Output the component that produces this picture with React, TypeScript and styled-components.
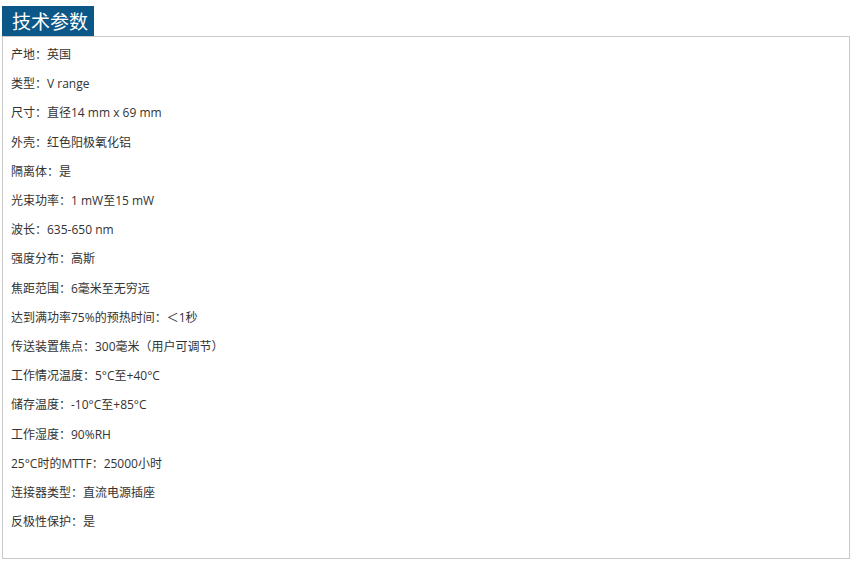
import React from 'react'
import styled, { createGlobalStyle } from 'styled-components'

const GlobalStyle = createGlobalStyle`
  body {
    margin: 0;
    background: #fff;
    font-family: "Open Sans", "Noto Sans CJK SC", sans-serif;
  }
`

const Wrapper = styled.div`
  padding: 6px 0 0 2px;
  width: 848px;
`

const TabTitle = styled.div`
  display: inline-block;
  background: #0b5788;
  color: #fff;
  font-family: "Noto Sans CJK SC", sans-serif;
  font-size: 19px;
  line-height: 30px;
  height: 30px;
  padding: 0 6px 0 10px;
`

const SpecBox = styled.div`
  border: 1px solid #c9c9c9;
  height: 518px;
  padding: 3px 8px 0;
  box-sizing: content-box;
  width: 830px;
`

const SpecRow = styled.p`
  margin: 0;
  font-size: 12px;
  line-height: 29.2px;
  color: #333;
`

const specs = [
  '产地：英国',
  '类型：V range',
  '尺寸：直径14 mm x 69 mm',
  '外壳：红色阳极氧化铝',
  '隔离体：是',
  '光束功率：1 mW至15 mW',
  '波长：635-650 nm',
  '强度分布：高斯',
  '焦距范围：6毫米至无穷远',
  '达到满功率75%的预热时间：＜1秒',
  '传送装置焦点：300毫米（用户可调节）',
  '工作情况温度：5°C至+40°C',
  '储存温度：-10°C至+85°C',
  '工作湿度：90%RH',
  '25°C时的MTTF：25000小时',
  '连接器类型：直流电源插座',
  '反极性保护：是',
]

export default function App() {
  return (
    <Wrapper>
      <GlobalStyle />
      <TabTitle>技术参数</TabTitle>
      <SpecBox>
        {specs.map(item => (
          <SpecRow key={item}>{item}</SpecRow>
        ))}
      </SpecBox>
    </Wrapper>
  )
}
